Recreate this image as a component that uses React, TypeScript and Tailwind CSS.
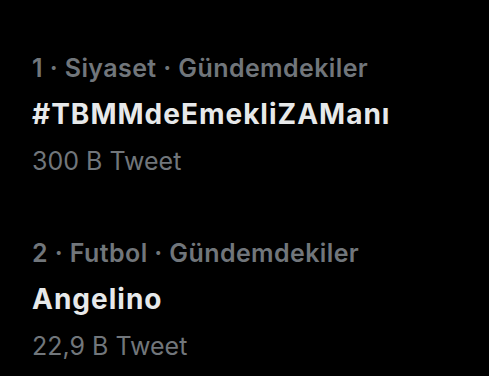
const trends = [
  { rank: 1, category: "Siyaset", title: "#TBMMdeEmekliZAManı", count: "300 B Tweet" },
  { rank: 2, category: "Futbol", title: "Angelino", count: "22,9 B Tweet" },
];

export default function App() {
  return (
    <div className="w-[489px] h-[376px] bg-black pl-8 pt-[54px] overflow-hidden font-['Inter',sans-serif]">
      {trends.map((t, i) => (
        <div key={t.rank} className={i > 0 ? "mt-[64px]" : ""}>
          <div className="text-[25px] leading-[28px] font-semibold tracking-[0.4px] text-[#71767b] whitespace-nowrap">
            {t.rank} · {t.category} · Gündemdekiler
          </div>
          <div className="mt-[16px] text-[28px] leading-[32px] font-bold tracking-[1px] text-[#e7e9ea] whitespace-nowrap">
            {t.title}
          </div>
          <div className="mt-[17px] text-[25px] leading-[28px] text-[#71767b] whitespace-nowrap">
            {t.count}
          </div>
        </div>
      ))}
    </div>
  );
}
